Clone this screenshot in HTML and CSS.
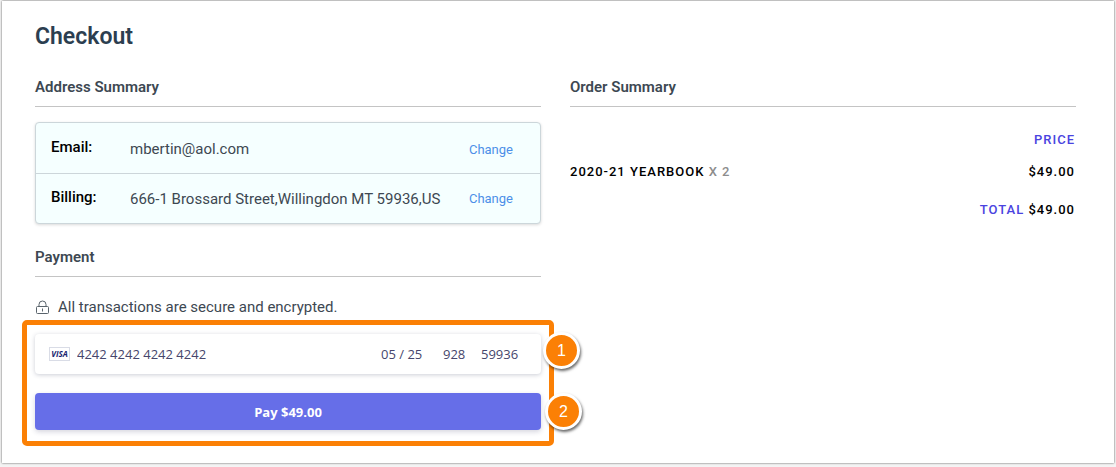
FILE: index.html
```
<!DOCTYPE html>
<html lang="en">
<head>
    <meta charset="UTF-8">
    <title>Checkout</title>
    <link rel="stylesheet" href="styles.css">
</head>
<body>
<div class="page">
    <h1>Checkout</h1>
    <div class="columns">
        <div class="col">
            <h2>Address Summary</h2>
            <div class="address">
                <div class="row">
                    <span class="name">Email:</span>
                    <span class="value">mbertin@aol.com</span>
                    <a class="change" href="#">Change</a>
                </div>
                <div class="row">
                    <span class="name">Billing:</span>
                    <span class="value">666-1 Brossard Street,Willingdon MT 59936,US</span>
                    <a class="change" href="#">Change</a>
                </div>
            </div>

            <h2>Payment</h2>
            <p class="secure">
                <svg class="lock" width="15" height="15" viewBox="0 0 15 15" fill="none" stroke="#5a646c">
                    <path d="M4 6.5V4.5a3.5 3.5 0 0 1 7 0v2"/>
                    <rect x="1.5" y="6.5" width="12" height="7" rx="1"/>
                    <path d="M7.5 8.5v3"/>
                </svg>
                All transactions are secure and encrypted.
            </p>
            <form class="pay">
                <div class="card">
                    <span class="visa">VISA</span>
                    <input class="number" type="text" value="4242 4242 4242 4242" aria-label="Card number">
                    <input class="date" type="text" value="05 / 25" aria-label="Expiry date">
                    <input class="cvc" type="text" value="928" aria-label="CVC">
                    <input class="zip" type="text" value="59936" aria-label="ZIP">
                </div>
                <button type="button">Pay $49.00</button>
                <span class="mark mark-card">1</span>
                <span class="mark mark-pay">2</span>
            </form>
        </div>

        <div class="col">
            <h2>Order Summary</h2>
            <table class="order">
                <thead>
                    <tr><td></td><th>Price</th></tr>
                </thead>
                <tbody>
                    <tr><td>2020-21 Yearbook <span class="count">x 2</span></td><td class="price">$49.00</td></tr>
                </tbody>
                <tfoot>
                    <tr><td class="price" colspan="2"><span class="total">Total</span> $49.00</td></tr>
                </tfoot>
            </table>
        </div>
    </div>
</div>
</body>
</html>
```
FILE: styles.css
```
* {
    margin: 0;
    padding: 0;
    box-sizing: border-box;
}

body {
    padding: 1px 2px 3px;
    background-color: #f4f4f4;
    font-family: Roboto, "Liberation Sans", sans-serif;
    font-size: 15px;
    color: #3d4852;
}

.page {
    padding: 21px 38px 17px 33px;
    background-color: #fff;
    box-shadow: 0 0 2px #555;
}

h1 {
    font-size: 23px;
    line-height: 30px;
    font-weight: 600;
    color: #2c3e50;
}

h2 {
    padding-bottom: 9px;
    border-bottom: 1px solid #c4c4c4;
    font-size: 15px;
    line-height: 20px;
    font-weight: 600;
}

.columns {
    display: grid;
    grid-template-columns: 1fr 1fr;
    column-gap: 29px;
    margin-top: 25px;
}

.address {
    margin: 15px 0 23px;
    border: 1px solid #ccd6da;
    border-radius: 4px;
    background-color: #f5ffff;
    box-shadow: 0 1px 3px rgba(0, 0, 0, 0.15);
}

.row {
    display: flex;
    align-items: center;
    height: 50px;
    padding: 2px 27px 0 15px;
}

.row + .row {
    padding-top: 0;
    border-top: 1px solid #ccd6da;
}

.name {
    width: 79px;
    padding-bottom: 4px;
    font-weight: 500;
    color: #000;
}

.value {
    flex: 1;
}

.change {
    font-size: 13px;
    color: #4c8fe8;
    text-decoration: none;
}

.secure {
    display: flex;
    align-items: center;
    gap: 8px;
    margin-top: 20px;
    line-height: 20px;
}

.pay {
    position: relative;
    margin: 3px -13px 0;
    padding: 9px 8px 11px;
    border: 5px solid #fb8005;
    border-radius: 5px;
}

.card {
    display: flex;
    align-items: center;
    height: 40px;
    padding: 0 14px;
    border-radius: 4px;
    box-shadow: 0 1px 4px rgba(50, 60, 93, 0.25);
}

.visa {
    width: 21px;
    margin-right: 7px;
    border: 1px solid #d9dce6;
    font: italic bold 8px/12px "Open Sans", sans-serif;
    text-align: center;
    color: #1a1f71;
}

.card input {
    border: 0;
    outline: none;
    background: none;
    font: 13px/20px "Open Sans", sans-serif;
    color: #46466c;
}

.card .number {
    flex: 1;
    min-width: 0;
}

.card .date {
    width: 62px;
}

.card .cvc {
    width: 38px;
}

.card .zip {
    width: 46px;
}

.pay button {
    display: block;
    width: 100%;
    height: 37px;
    margin-top: 19px;
    border: 0;
    border-radius: 4px;
    background-color: #666ee8;
    box-shadow: 0 2px 5px rgba(50, 50, 93, 0.2);
    font: bold 13px/20px "Open Sans", sans-serif;
    color: #fff;
}

/* numbered markers on the edge of the box */
.mark {
    position: absolute;
    width: 37px;
    height: 37px;
    border: 3px solid #fff;
    border-radius: 50%;
    background-color: #fb8005;
    box-shadow: 1px 2px 3px rgba(0, 0, 0, 0.6);
    font: 16px/31px "Liberation Sans", sans-serif;
    text-align: center;
    color: #fff;
}

.mark-card {
    top: 7px;
    right: -31px;
}

.mark-pay {
    top: 68px;
    right: -33px;
}

.order {
    width: 100%;
    margin-top: 17px;
    border-collapse: collapse;
    font-size: 13px;
    line-height: 32px;
    font-weight: 500;
    letter-spacing: 1px;
    text-transform: uppercase;
    color: #000;
}

.order th,
.price {
    padding-right: 1px;
    text-align: right;
}

.order th,
.total {
    font-weight: 500;
    color: #4a43e0;
}

.order tfoot td {
    padding-top: 6px;
}

.count {
    color: #8d8d8d;
}
```
